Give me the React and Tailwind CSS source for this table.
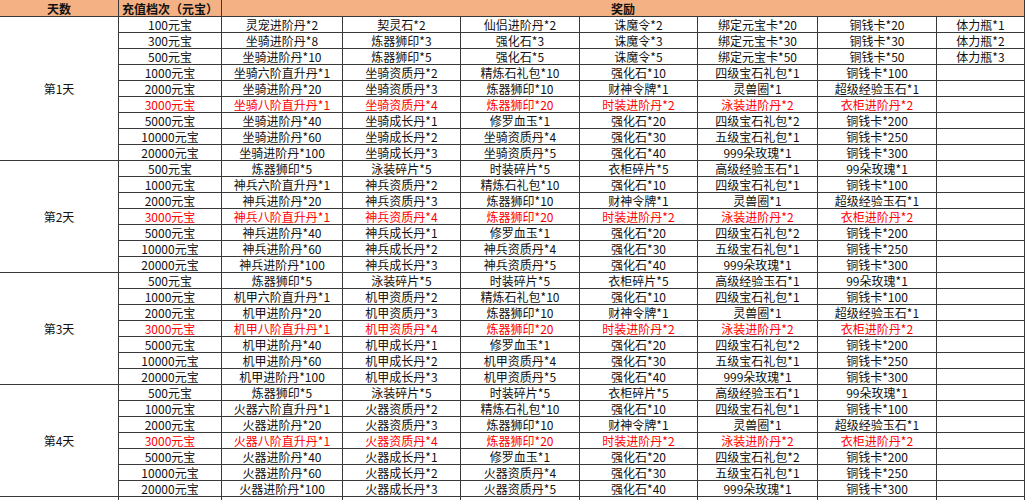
const days = [
  {
    label: '第1天',
    rows: [
      ['100元宝', '灵宠进阶丹*2', '契灵石*2', '仙侣进阶丹*2', '诛魔令*2', '绑定元宝卡*20', '铜钱卡*20', '体力瓶*1'],
      ['300元宝', '坐骑进阶丹*8', '炼器狮印*3', '强化石*3', '诛魔令*3', '绑定元宝卡*30', '铜钱卡*30', '体力瓶*2'],
      ['500元宝', '坐骑进阶丹*10', '炼器狮印*5', '强化石*5', '诛魔令*5', '绑定元宝卡*50', '铜钱卡*50', '体力瓶*3'],
      ['1000元宝', '坐骑六阶直升丹*1', '坐骑资质丹*2', '精炼石礼包*10', '强化石*10', '四级宝石礼包*1', '铜钱卡*100', ''],
      ['2000元宝', '坐骑进阶丹*20', '坐骑资质丹*3', '炼器狮印*10', '财神令牌*1', '灵兽圈*1', '超级经验玉石*1', ''],
      ['3000元宝', '坐骑八阶直升丹*1', '坐骑资质丹*4', '炼器狮印*20', '时装进阶丹*2', '泳装进阶丹*2', '衣柜进阶丹*2', ''],
      ['5000元宝', '坐骑进阶丹*40', '坐骑成长丹*1', '修罗血玉*1', '强化石*20', '四级宝石礼包*2', '铜钱卡*200', ''],
      ['10000元宝', '坐骑进阶丹*60', '坐骑成长丹*2', '坐骑资质丹*4', '强化石*30', '五级宝石礼包*1', '铜钱卡*250', ''],
      ['20000元宝', '坐骑进阶丹*100', '坐骑成长丹*3', '坐骑资质丹*5', '强化石*40', '999朵玫瑰*1', '铜钱卡*300', ''],
    ],
  },
];

// days 2-4 share the same layout, only the item prefix changes
const later = [
  ['第2天', '神兵'],
  ['第3天', '机甲'],
  ['第4天', '火器'],
];

later.forEach(([label, p]) => {
  days.push({
    label,
    rows: [
      ['500元宝', '炼器狮印*5', '泳装碎片*5', '时装碎片*5', '衣柜碎片*5', '高级经验玉石*1', '99朵玫瑰*1', ''],
      ['1000元宝', `${p}六阶直升丹*1`, `${p}资质丹*2`, '精炼石礼包*10', '强化石*10', '四级宝石礼包*1', '铜钱卡*100', ''],
      ['2000元宝', `${p}进阶丹*20`, `${p}资质丹*3`, '炼器狮印*10', '财神令牌*1', '灵兽圈*1', '超级经验玉石*1', ''],
      ['3000元宝', `${p}八阶直升丹*1`, `${p}资质丹*4`, '炼器狮印*20', '时装进阶丹*2', '泳装进阶丹*2', '衣柜进阶丹*2', ''],
      ['5000元宝', `${p}进阶丹*40`, `${p}成长丹*1`, '修罗血玉*1', '强化石*20', '四级宝石礼包*2', '铜钱卡*200', ''],
      ['10000元宝', `${p}进阶丹*60`, `${p}成长丹*2`, `${p}资质丹*4`, '强化石*30', '五级宝石礼包*1', '铜钱卡*250', ''],
      ['20000元宝', `${p}进阶丹*100`, `${p}成长丹*3`, `${p}资质丹*5`, '强化石*40', '999朵玫瑰*1', '铜钱卡*300', ''],
    ],
  });
});

const cell = 'bg-white flex items-center justify-center whitespace-nowrap overflow-hidden';

export default function App() {
  return (
    <div className="w-[1028px] h-[500px] overflow-hidden bg-white font-['Noto_Sans_CJK_SC','Liberation_Sans',sans-serif] text-[12px] leading-[15px] text-[#111]">
      <div className="w-[1025px] bg-[#3a3a3a] pr-px grid grid-cols-[118px_102px_120px_117px_118px_117px_119px_118px_87px] grid-rows-[16px] auto-rows-[15px] gap-px">
        <div className="bg-[#f4b183] flex items-center justify-center font-bold">天数</div>
        <div className="bg-[#f4b183] flex items-center justify-center font-bold">充值档次（元宝）</div>
        <div className="bg-[#f4b183] col-span-7 flex items-center justify-center font-bold">奖励</div>

        {days.map((day) => [
          <div key={day.label} className={`${cell} ${day.rows.length === 9 ? 'row-span-9' : 'row-span-7'}`}>
            {day.label}
          </div>,
          ...day.rows.map((row, i) => {
            const red = row[0] === '3000元宝';
            return row.map((text, j) => (
              <div key={`${day.label}-${i}-${j}`} className={`${cell} ${red ? 'text-[#ff0000]' : ''}`}>
                {text}
              </div>
            ));
          }),
        ])}

        {Array.from({ length: 9 }).map((_, i) => (
          <div key={`tail-${i}`} className="bg-white" />
        ))}
      </div>
    </div>
  );
}
